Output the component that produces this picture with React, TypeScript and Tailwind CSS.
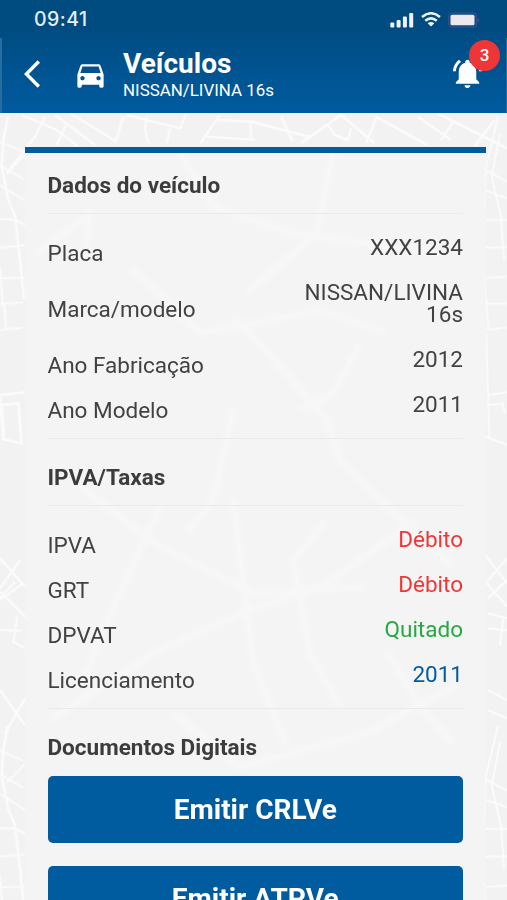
import { MdDirectionsCar, MdNotificationsActive } from 'react-icons/md';

type Row = {
  label: string;
  value: string;
  color?: string;
};

const vehicleRows: Row[] = [
  { label: 'Placa', value: 'XXX1234' },
  { label: 'Marca/modelo', value: 'NISSAN/LIVINA 16s' },
  { label: 'Ano Fabricação', value: '2012' },
  { label: 'Ano Modelo', value: '2011' },
];

const taxRows: Row[] = [
  { label: 'IPVA', value: 'Débito', color: 'text-[#ef3636]' },
  { label: 'GRT', value: 'Débito', color: 'text-[#ef3636]' },
  { label: 'DPVAT', value: 'Quitado', color: 'text-[#27a844]' },
  { label: 'Licenciamento', value: '2011', color: 'text-[#005b9f]' },
];

// Streets of the map texture. The sides repeat once the tile ends.
function StreetMap() {
  return (
    <svg className="absolute inset-0" width="507" height="900" viewBox="0 0 1521 2700" fill="none" stroke="#fff">
      <defs>
        <g id="west">
          <path strokeWidth="8" d="M24 350 10 420 5 500 25 600 45 650 60 780 72 900M0 658 45 658 75 675" />
          <path strokeWidth="6" d="M0 425 70 455M0 495 70 537M0 555 75 602M75 465 20 520M0 743 75 736M0 835 75 833M0 911 70 908M0 990 70 983M12 910 18 988M0 800 8 920" />
        </g>
        <g id="east">
          <path strokeWidth="6" d="M1494 350 1458 500 1452 640M1452 820 1465 985M1452 508 1521 545M1452 570 1521 595M1458 660 1521 660M1458 742 1521 742M1458 834 1521 830M1458 910 1521 910M1458 990 1521 982M1500 400 1475 530 1503 650 1512 780" />
        </g>
        <filter id="soft">
          <feGaussianBlur stdDeviation="8" />
        </filter>
      </defs>

      <g opacity="0.68">
        <use href="#west" />
        <use href="#east" />
        <use href="#west" y="1827" />
        <use href="#east" y="1827" />

        {/* blocks halfway down */}
        <path strokeWidth="8" d="M0 1185 75 1177M5 1215 55 1210 65 1330 12 1318ZM0 1190 10 1320" />
        <path strokeWidth="6" d="M1458 1000 1468 1315M1460 1185 1521 1177M1468 1215 1507 1210 1515 1240M1455 1310 1521 1335" />

        {/* strip between header and card */}
        <path strokeWidth="7" d="M65 345 170 390 235 440M135 350 105 410 20 520M200 370 170 435M165 345 285 435M210 340 350 425M370 350 345 430M380 345 540 385 560 340M440 350 435 390 445 430M510 385 500 430M660 345 600 430M650 360 765 365M620 410 765 420M750 365 755 420" />
        <path strokeWidth="8" d="M753 365 928 410 905 428M843 350 878 425M903 430 1023 345 1123 430M983 370 1003 405 1043 420 1053 385M1128 355 1098 430M1128 350 1253 420 1283 435M1253 350 1353 420M1363 360 1323 420M1313 340 1521 445M1483 360 1423 440" />

        {/* junctions beside the tax rows */}
        <path strokeWidth="7" d="M0 1675 75 1760M0 1765 60 1680M0 1795 45 1745M0 1775 85 1860M0 1800 70 1750M0 1890 65 1892M52 1850 40 1925 75 1945M0 2070 75 2175M75 2095 15 2200" />
        <path strokeWidth="7" d="M1455 1665 1521 1750M1521 1675 1460 1745M1460 1750 1521 1820M1463 1795 1521 1740M1463 1840 1521 1855M1463 1885 1521 1890M1510 1850 1500 1935M1463 2070 1521 2100M1463 2130 1521 2155" />
      </g>

      {/* washed out streets under the card */}
      <g strokeWidth="22" opacity="0.9" filter="url(#soft)">
        <path d="M110 760 270 640 260 740M390 800 600 1000 960 930 1160 1000M700 950 860 1120 980 1260 1020 1380 1140 1500 1360 1700M1080 1030 1000 1180 900 1230M240 1460 480 1640 760 1780 1100 1760M700 1230 640 1500 560 1600" />
        <path d="M700 1500 730 1750 760 1990 860 2240M980 1560 880 1680 930 1960 1020 2120M150 2160 460 1960 700 1850 980 1750 1250 1560M480 1520 350 1800 240 2060M1160 1950 1260 2120 1360 2230M1000 450 950 700 740 880M540 460 640 620 880 700 1320 760M520 2140 720 2300 1100 2200 1380 2050" />
      </g>
    </svg>
  );
}

function StatusBar() {
  return (
    <div className="flex h-[38px] items-center justify-between pl-[34px] pr-[27px]">
      <span className="pt-[2px] font-[Inter] text-[19.5px] font-medium leading-none tracking-[0.5px] text-[#e6eff8]">09:41</span>
      <div className="flex items-center gap-[7px] pt-px text-[#edf3f9]">
        <svg width="24" height="16" viewBox="0 0 24 16" fill="currentColor">
          <rect x="0.3" y="10.5" width="4" height="5" rx="1" />
          <rect x="6.6" y="8" width="4" height="7.5" rx="1" />
          <rect x="12.9" y="4.5" width="4" height="11" rx="1" />
          <rect x="19.2" y="1" width="4" height="14.5" rx="1" />
        </svg>
        <svg width="20" height="15" viewBox="0 0 20 15" fill="none" stroke="currentColor" strokeWidth="2.5">
          <path d="M1 5Q10-2.5 19 5M4.3 8.7Q10 4 15.7 8.7" />
          <path d="M6.6 11.2Q10 8.7 13.4 11.2L10 14.6Z" fill="currentColor" stroke="none" />
        </svg>
        <svg width="32" height="16" viewBox="0 0 32 16">
          <rect x="0.8" y="1" width="27.5" height="14" rx="3.5" fill="none" stroke="#474f88" strokeWidth="1.1" />
          <rect x="2.5" y="2.8" width="24" height="10.4" rx="1.5" fill="#ebe9ef" />
          <path d="M29.5 5.5Q33 8 29.5 10.5Z" fill="#474f88" />
        </svg>
      </div>
    </div>
  );
}

function SectionTitle({ children }: { children: string }) {
  return <h2 className="text-[22.5px] font-bold leading-[26px] text-[#3c3c3c]">{children}</h2>;
}

function DataList({ rows }: { rows: Row[] }) {
  return (
    <dl className="flex flex-col gap-[22.5px]">
      {rows.map((row) => (
        <div key={row.label} className="flex items-center justify-between text-[22.5px] leading-[22.5px] text-[#424242]">
          <dt className="relative top-[6px]">{row.label}</dt>
          <dd className={`w-[165px] text-right ${row.color ?? ''}`}>{row.value}</dd>
        </div>
      ))}
    </dl>
  );
}

export default function App() {
  return (
    <div className="relative h-[900px] w-[507px] overflow-hidden bg-[#f2f2f2] font-[Roboto,sans-serif]">
      <StreetMap />

      {/* Header */}
      <header className="relative h-[113px] bg-linear-to-b from-[#004b80] from-20% to-[#005b9f]">
        <StatusBar />
        <div className="flex h-[75px] border-l-2 border-r border-[#286d9f] text-white">
          <svg className="ml-[21px] mt-[22px]" width="18" height="28" viewBox="0 0 18 28" fill="none" stroke="currentColor" strokeWidth="3.4">
            <path d="M15.8 1.5 3.4 14 15.8 26.5" />
          </svg>
          <MdDirectionsCar className="ml-[32px] mt-[19px] size-[35px]" />
          <div className="ml-[15px] mt-[9px]">
            <h1 className="text-[28px] font-bold leading-[34px]">Veículos</h1>
            <p className="text-[16.9px] leading-[19px]">NISSAN/LIVINA 16s</p>
          </div>
          <div className="relative ml-auto mr-[21px] mt-[18px] size-[35px]">
            <MdNotificationsActive className="size-[35px]" />
            <span className="absolute left-[19px] top-[-16px] flex size-[31px] items-center justify-center rounded-full bg-[#ef3636] text-[17px] font-medium">
              3
            </span>
          </div>
        </div>
      </header>

      {/* Vehicle card */}
      <main className="relative ml-[25px] mt-[34px] h-[760px] w-[461px] border-t-[6px] border-[#005b9f] bg-[#f4f4f4]/75 pl-[22.5px] pr-[23px]">
        <section className="pt-[19px]">
          <SectionTitle>Dados do veículo</SectionTitle>
          <div className="mb-[21.5px] mt-[15px] border-t border-[#eaeaea]" />
          <DataList rows={vehicleRows} />
        </section>

        <section className="mt-[22px] border-t border-[#eaeaea] pt-[25.5px]">
          <SectionTitle>IPVA/Taxas</SectionTitle>
          <div className="mb-[21.5px] mt-[15px] border-t border-[#eaeaea]" />
          <DataList rows={taxRows} />
        </section>

        <section className="mt-[22.5px] border-t border-[#eaeaea] pt-[25.5px]">
          <SectionTitle>Documentos Digitais</SectionTitle>
          <div className="mt-[15.5px] flex flex-col gap-[22.5px]">
            <button className="h-[67.5px] shrink-0 rounded-[5px] bg-[#005b9f] pt-px text-[28px] font-bold text-white">Emitir CRLVe</button>
            <button className="h-[67.5px] shrink-0 rounded-[5px] bg-[#005b9f] text-[28px] font-bold text-white">Emitir ATPVe</button>
          </div>
        </section>
      </main>
    </div>
  );
}
